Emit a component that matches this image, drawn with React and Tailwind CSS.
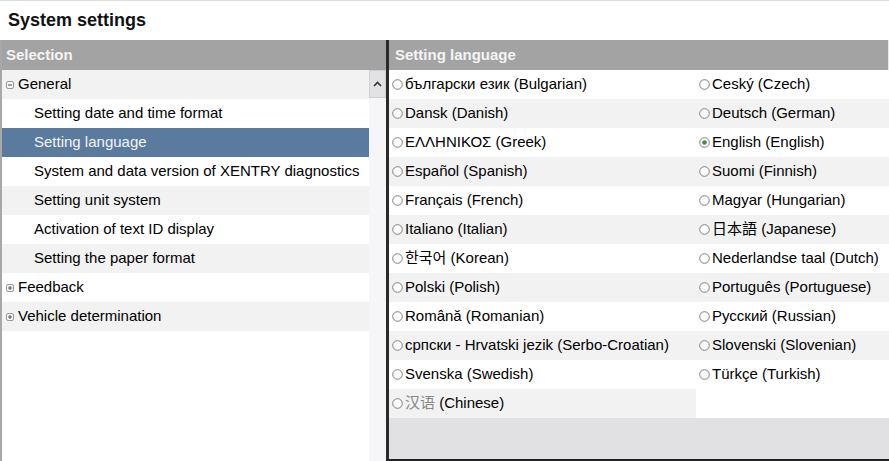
import React from "react";

const treeRows = [
  { label: "General", level: 0, icon: "minus" },
  { label: "Setting date and time format", level: 1 },
  { label: "Setting language", level: 1, selected: true },
  { label: "System and data version of XENTRY diagnostics", level: 1 },
  { label: "Setting unit system", level: 1 },
  { label: "Activation of text ID display", level: 1 },
  { label: "Setting the paper format", level: 1 },
  { label: "Feedback", level: 0, icon: "plus" },
  { label: "Vehicle determination", level: 0, icon: "plus" },
];

const languages = [
  ["български език (Bulgarian)", "Ceský (Czech)"],
  ["Dansk (Danish)", "Deutsch (German)"],
  ["ΕΛΛΗΝΙΚΟΣ (Greek)", "English (English)"],
  ["Español (Spanish)", "Suomi (Finnish)"],
  ["Français (French)", "Magyar (Hungarian)"],
  ["Italiano (Italian)", "日本語 (Japanese)"],
  ["한국어 (Korean)", "Nederlandse taal (Dutch)"],
  ["Polski (Polish)", "Português (Portuguese)"],
  ["Română (Romanian)", "Русский (Russian)"],
  ["српски - Hrvatski jezik (Serbo-Croatian)", "Slovenski (Slovenian)"],
  ["Svenska (Swedish)", "Türkçe (Turkish)"],
  ["汉语 (Chinese)", null],
];

function TreeIcon({ type }) {
  return (
    <svg width="8" height="8" viewBox="0 0 8 8" className="mr-[4px]">
      <rect x="0.5" y="0.5" width="7" height="7" rx="1.5" fill="#f4f4f4" stroke="#9a9a9a" />
      <line x1="2" y1="4" x2="6" y2="4" stroke="#555" />
      {type === "plus" && <line x1="4" y1="2" x2="4" y2="6" stroke="#555" />}
    </svg>
  );
}

function Radio({ checked }) {
  return (
    <svg width="11" height="11" viewBox="0 0 11 11" className="mr-[2px] shrink-0">
      <circle cx="5.5" cy="5.5" r="4.8" fill="#fff" stroke="#7e7e7e" strokeWidth="1" />
      {checked && <circle cx="5.5" cy="5.5" r="2.3" fill="#3e8a4a" />}
    </svg>
  );
}

function LangCell({ label, first }) {
  if (!label) return <div className="flex-1" />;
  const chinese = label.startsWith("汉语");
  return (
    <div className={`flex items-center pl-[3px] ${first ? "w-[307px]" : "flex-1"}`}>
      <Radio checked={label.startsWith("English")} />
      {chinese ? (
        <span>
          <span className="text-[#888]">汉语</span> (Chinese)
        </span>
      ) : (
        <span className="whitespace-nowrap">{label}</span>
      )}
    </div>
  );
}

export default function App() {
  return (
    <div
      className="w-[889px] h-[461px] bg-white overflow-hidden flex flex-col text-[15px] text-black"
      style={{ fontFamily: '"Liberation Sans", Arial, "Noto Sans CJK SC", sans-serif' }}
    >
      <div className="h-[40px] flex items-center pl-[8px] text-[18px] font-bold text-[#111] border-t border-[#ddd]">
        System settings
      </div>

      <div className="flex flex-1 min-h-0">
        {/* left selection panel */}
        <div className="w-[386px] flex flex-col border-l-2 border-[#a8a8a8]">
          <div className="h-[30px] bg-[#a3a3a3] text-[#f4f4f4] font-bold flex items-center pl-[4px]">
            Selection
          </div>
          <div className="flex flex-1">
            <div className="flex-1 flex flex-col">
              {treeRows.map((row, i) => (
                <div
                  key={row.label}
                  className={`h-[29px] flex items-center ${
                    row.selected
                      ? "bg-[#5a7a9e] text-[#f2f4f7]"
                      : i % 2 === 0
                        ? "bg-[#f2f2f2]"
                        : "bg-white"
                  } ${row.level === 0 ? "pl-[4px]" : "pl-[32px]"}`}
                >
                  {row.icon && <TreeIcon type={row.icon} />}
                  {row.label}
                </div>
              ))}
            </div>
            <div className="w-[17px] bg-[#f6f6f8] flex flex-col">
              <div className="h-[28px] bg-[#e2e2e4] border border-[#cfcfd2] flex items-center justify-center">
                <svg width="9" height="6" viewBox="0 0 9 6">
                  <path d="M1 5 L4.5 1.5 L8 5" fill="none" stroke="#333" strokeWidth="1.6" />
                </svg>
              </div>
            </div>
          </div>
        </div>

        {/* divider */}
        <div className="w-[3px] bg-[#2a2a2a]" />

        {/* right language panel */}
        <div className="flex-1 flex flex-col border-b-2 border-[#222]">
          <div className="h-[30px] bg-[#a3a3a3] text-[#f4f4f4] font-bold flex items-center pl-[6px] border-r border-[#e8e8e8]">
            Setting language
          </div>
          <div className="flex flex-col">
            {languages.map(([a, b], i) => (
              <div
                key={a}
                className={`h-[29px] flex ${i % 2 === 1 && b ? "bg-[#f2f2f2]" : "bg-white"}`}
              >
                <div className={`flex ${i % 2 === 1 ? "bg-[#f2f2f2]" : ""}`}>
                  <LangCell label={a} first />
                </div>
                <LangCell label={b} />
              </div>
            ))}
          </div>
          <div className="flex-1 bg-[#e1e1e4]" />
        </div>
      </div>
    </div>
  );
}
